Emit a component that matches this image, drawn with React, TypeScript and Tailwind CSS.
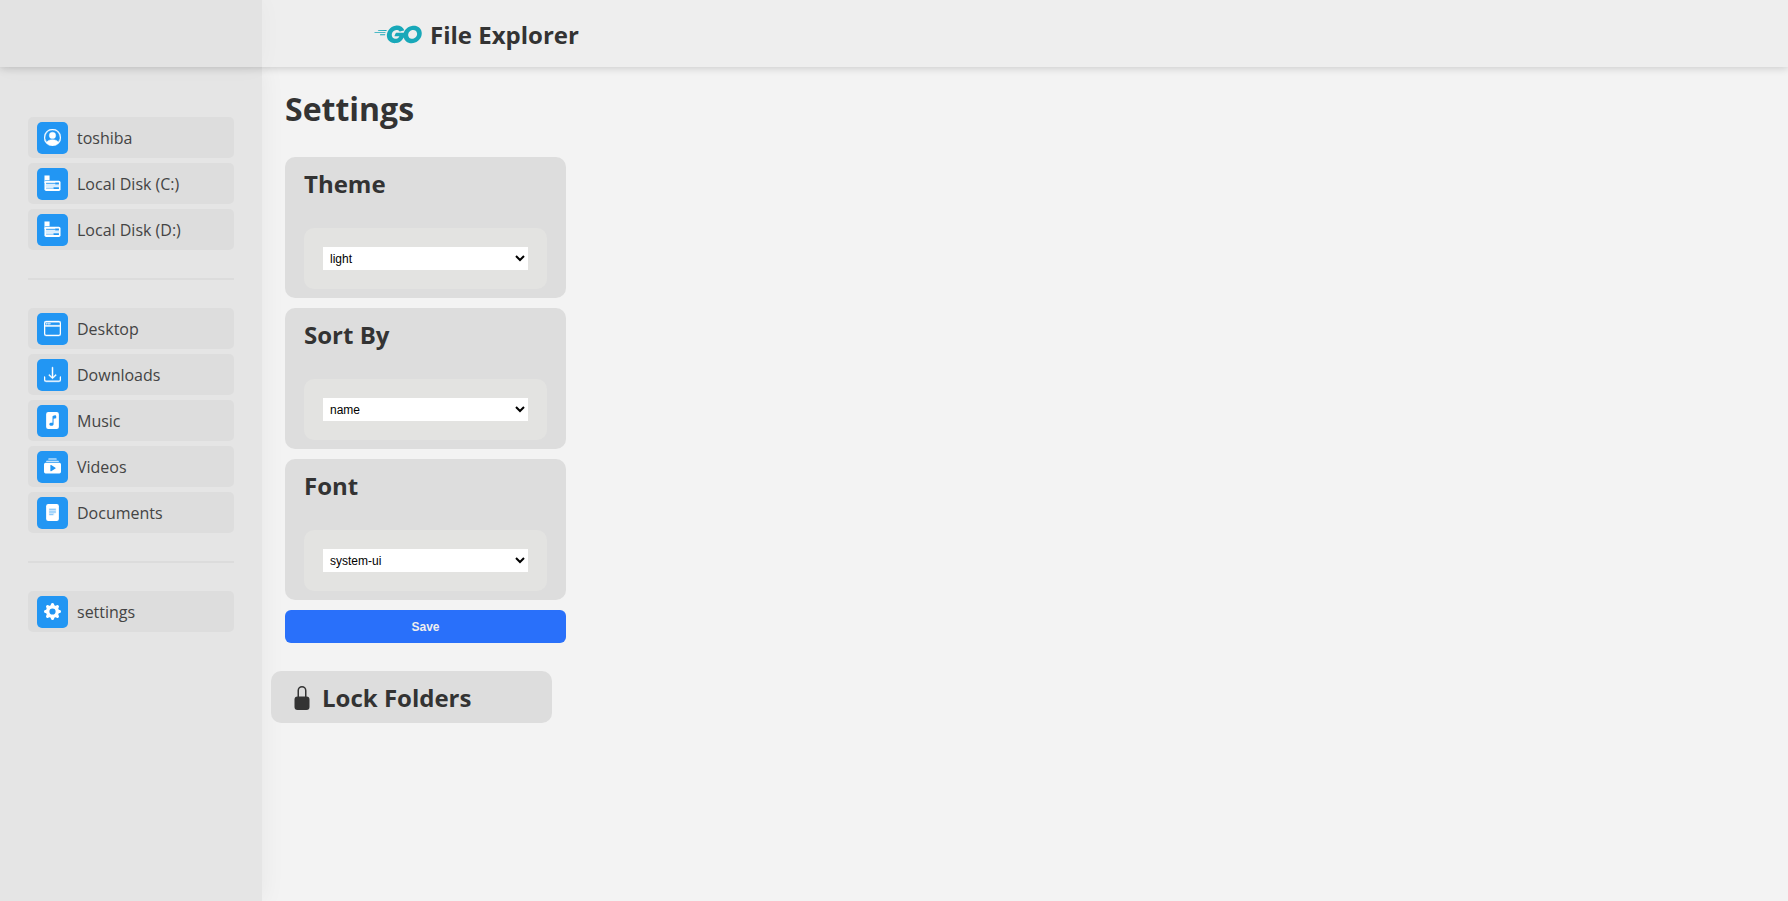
import type { ComponentType, SVGProps } from "react";
import {
  BsCollectionPlayFill,
  BsDownload,
  BsFileMusicFill,
  BsGearFill,
  BsLockFill,
  BsPersonCircle,
  BsWindow,
} from "react-icons/bs";
import { FaGolang } from "react-icons/fa6";

function DriveIcon(props: SVGProps<SVGSVGElement>) {
  return (
    <svg viewBox="0 0 18 18" fill="none" {...props}>
      <path d="M0.5 0.5h5.4v5h-5.4z" fill="currentColor" />
      <path d="M0.5 5.5h1v3h-1z" fill="currentColor" />
      <rect x="0.5" y="6.2" width="17" height="10.8" rx="1.8" fill="currentColor" />
      <path d="M2.2 9h9.6" stroke="#2296f3" strokeWidth="1.5" opacity="0.75" />
      <path d="M11.8 9h4M10 14h5.8" stroke="#2296f3" strokeWidth="1.9" />
      <path d="M1.8 11.6h14.4" stroke="#2296f3" strokeWidth="0.7" opacity="0.5" />
      <path d="M2.2 14h7.8" stroke="#2296f3" strokeWidth="1.3" opacity="0.5" />
    </svg>
  );
}

function DocumentIcon(props: SVGProps<SVGSVGElement>) {
  return (
    <svg viewBox="0 0 16 16" fill="none" {...props}>
      <rect x="2" width="12" height="16" rx="2" fill="currentColor" />
      <path d="M4.6 4.3h6.8v4.4h-1.8v1.8h-5z" fill="#2296f3" opacity="0.25" />
      <path d="M5 5h6M5 7.5h6M5 10h3.5" stroke="#2296f3" strokeWidth="0.9" opacity="0.45" />
    </svg>
  );
}

type Icon = ComponentType<{ className?: string }>;
type Entry = { label: string; icon: Icon };

const groups: Entry[][] = [
  [
    { label: "toshiba", icon: BsPersonCircle },
    { label: "Local Disk (C:)", icon: DriveIcon },
    { label: "Local Disk (D:)", icon: DriveIcon },
  ],
  [
    { label: "Desktop", icon: BsWindow },
    { label: "Downloads", icon: BsDownload },
    { label: "Music", icon: BsFileMusicFill },
    { label: "Videos", icon: BsCollectionPlayFill },
    { label: "Documents", icon: DocumentIcon },
  ],
  [{ label: "settings", icon: BsGearFill }],
];

const outlined = new Set(["toshiba", "Desktop", "Downloads"]);

const settings = [
  { id: "theme", title: "Theme", options: ["light", "dark"] },
  { id: "sort", title: "Sort By", options: ["name", "size", "date"] },
  { id: "font", title: "Font", options: ["system-ui", "sans-serif", "monospace"] },
];

function Sidebar() {
  return (
    <nav className="w-[262px] shrink-0 bg-[#e5e5e5] px-7 pt-[50px] shadow-[0_0_24px_rgba(0,0,0,0.06)]">
      {groups.map((group, i) => (
        <ul
          key={i}
          className="flex flex-col gap-[5px] not-first:mt-7 not-first:border-t-2 not-first:border-[#dcdcdc] not-first:pt-7"
        >
          {group.map(({ label, icon: Icon }) => (
            <li key={label}>
              <a
                href="#"
                className="flex h-[41px] items-center gap-[9px] rounded-[5px] bg-[#dddddd] pl-[9px] text-base text-[#444444]"
              >
                <span className="flex h-8 w-[31px] items-center justify-center rounded-[5px] bg-[#2296f3] text-white">
                  <Icon className={outlined.has(label) ? "size-[17px] stroke-current stroke-[0.4px]" : "size-[17px]"} />
                </span>
                {label}
              </a>
            </li>
          ))}
        </ul>
      ))}
    </nav>
  );
}

export default function App() {
  return (
    <div className="flex min-h-screen flex-col bg-[#f3f3f3] font-['Open_Sans','Noto_Sans',sans-serif] text-[#333333]">
      <header className="z-10 flex h-[67px] bg-[#eeeeee] shadow-[0_1px_8px_rgba(0,0,0,0.18)]">
        <div className="w-[262px] shrink-0 bg-[#e3e3e3] shadow-[0_0_24px_rgba(0,0,0,0.03)]" />
        <div className="flex items-center gap-2 pt-0.5 pl-28">
          <FaGolang className="h-[38px] w-12 text-[#18a8b9]" />
          <span className="text-2xl font-bold">File Explorer</span>
        </div>
      </header>
      <div className="flex grow">
        <Sidebar />
        <main className="flex flex-col pt-5 pl-[9px]">
          <form className="ml-[14px] flex w-[281px] flex-col gap-[10px]" onSubmit={(e) => e.preventDefault()}>
            <h1 className="mb-4 text-[32px] leading-[44px] font-bold">Settings</h1>
            {settings.map(({ id, title, options }) => (
              <section key={id} className="rounded-[10px] bg-[#dddddd] px-[19px] pt-[11px] pb-[9px]">
                <label htmlFor={id} className="block text-2xl leading-8 font-bold">
                  {title}
                </label>
                <div className="mt-7 flex rounded-[10px] bg-[#e3e3e1] px-[19px] py-[19px]">
                  <select
                    id={id}
                    className="h-[23px] w-full bg-white px-[3px] font-['Liberation_Sans',Arial,sans-serif] text-xs text-black"
                  >
                    {options.map((option) => (
                      <option key={option}>{option}</option>
                    ))}
                  </select>
                </div>
              </section>
            ))}
            <button
              type="submit"
              className="h-[33px] rounded-md bg-[#2970fa] font-['Liberation_Sans',Arial,sans-serif] text-xs font-bold text-[#eeeeee]"
            >
              Save
            </button>
          </form>
          <section className="mt-7 flex h-[52px] w-[281px] items-center gap-2 rounded-[10px] bg-[#dddddd] pt-0.5 pl-[19px]">
            <BsLockFill className="size-6" />
            <h2 className="text-2xl font-bold">Lock Folders</h2>
          </section>
        </main>
      </div>
    </div>
  );
}
